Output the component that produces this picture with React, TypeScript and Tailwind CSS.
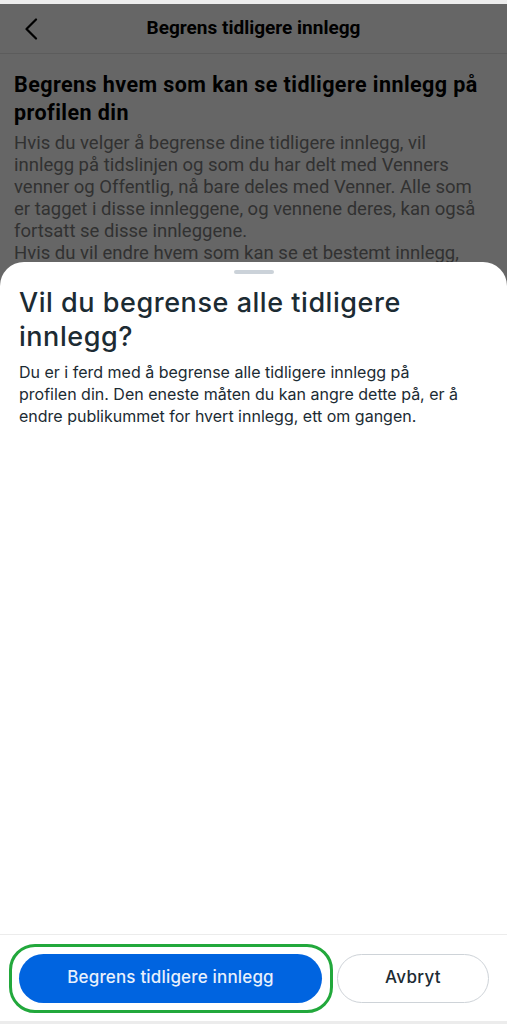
import React from 'react';

const roboto = { fontFamily: 'Roboto, "Liberation Sans", sans-serif' };

const pageLines = [
  'Hvis du velger å begrense dine tidligere innlegg, vil',
  'innlegg på tidslinjen og som du har delt med Venners',
  'venner og Offentlig, nå bare deles med Venner. Alle som',
  'er tagget i disse innleggene, og vennene deres, kan også',
  'fortsatt se disse innleggene.',
  'Hvis du vil endre hvem som kan se et bestemt innlegg,',
  'kan du gå til innlegget og velge et nytt publikum.',
];

const sheetLines = [
  'Du er i ferd med å begrense alle tidligere innlegg på',
  'profilen din. Den eneste måten du kan angre dette på, er å',
  'endre publikummet for hvert innlegg, ett om gangen.',
];

const App: React.FC = () => {
  return (
    <div className="relative h-[1024px] w-full overflow-hidden bg-white" style={roboto}>
      {/* page underneath the sheet */}
      <div className="h-[4px] bg-[#ededed]" />
      <div className="relative z-0">
        <header className="flex h-[50px] items-center border-b border-[#e6e6e6]">
          <div className="flex w-[60px] pl-[24px]">
            <svg width="14" height="22" viewBox="0 0 14 22" fill="none">
              <path d="M12 1.5 L2.5 11 L12 20.5" stroke="#000" strokeWidth="2.2" strokeLinecap="round" strokeLinejoin="round" />
            </svg>
          </div>
          <h1 className="flex-1 text-center text-[19px] font-bold text-black">Begrens tidligere innlegg</h1>
          <div className="w-[60px]" />
        </header>
        <div className="px-[14px] pt-[17px]">
          <h2 className="text-[21.5px] leading-[28px] font-bold tracking-[0.02em] text-black">
            Begrens hvem som kan se tidligere innlegg på profilen din
          </h2>
          <p className="mt-[5px] text-[18.5px] leading-[22px] text-[#7c7c7c]">
            {pageLines.map((line) => (
              <span key={line} className="block whitespace-nowrap">{line}</span>
            ))}
          </p>
        </div>
      </div>

      {/* dim overlay */}
      <div className="absolute inset-x-0 top-[4px] bottom-0 bg-black/60" />

      {/* bottom sheet */}
      <div
        className="absolute inset-x-0 top-[262px] bottom-0 flex flex-col rounded-t-[24px] bg-white"
        style={{ fontFamily: 'Inter, "Open Sans", sans-serif' }}
      >
        <div className="flex justify-center pt-[8px]">
          <div className="h-[4px] w-[40px] rounded-full bg-[#cbd2d9]" />
        </div>
        <div className="flex-1 px-[19px] pt-[12px]">
          <h3 className="text-[27px] leading-[34px] font-medium tracking-[0.02em] text-[#1c2b33]">
            Vil du begrense alle tidligere innlegg?
          </h3>
          <p className="mt-[7px] text-[16px] leading-[22px] text-[#1c2b33]">
            {sheetLines.map((line) => (
              <span key={line} className="block whitespace-nowrap">{line}</span>
            ))}
          </p>
        </div>
        <div className="flex h-[87px] items-center gap-[15px] border-t border-[#ececec] pr-[18px] pl-[19px]">
          <div className="relative w-[303px] shrink-0">
            <div className="pointer-events-none absolute -top-[10px] -right-[11px] -bottom-[10px] -left-[10px] rounded-[26px] border-[3px] border-[#22a83c]" />
            <button className="flex h-[49px] w-full items-center justify-center rounded-full bg-[#0064e0] text-[17px] font-medium tracking-[0.01em] text-[#e8f0fc]">
              Begrens tidligere innlegg
            </button>
          </div>
          <button className="flex h-[49px] flex-1 items-center justify-center rounded-full border border-[#ced3d8] bg-white text-[17px] font-medium tracking-[0.02em] text-[#1c2b33]">
            Avbryt
          </button>
        </div>
        <div className="h-[3px] bg-[#ececec]" />
      </div>
    </div>
  );
};

export default App;
